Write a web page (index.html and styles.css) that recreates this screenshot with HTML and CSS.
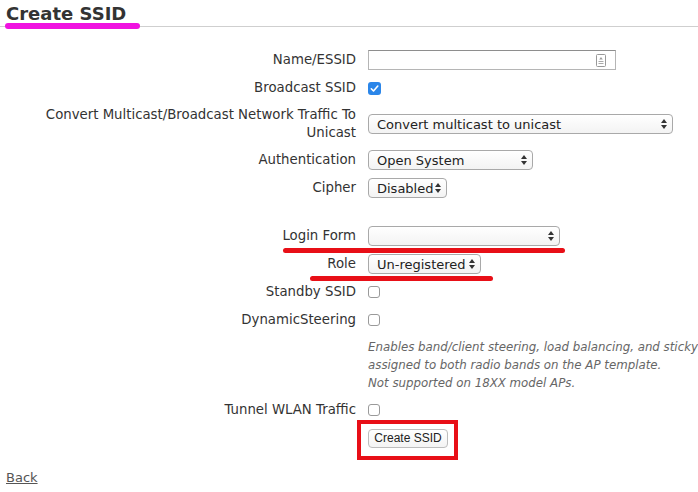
FILE: index.html
```html
<!DOCTYPE html>
<html lang="en">
<head>
    <meta charset="UTF-8">
    <title>Create SSID</title>
    <link rel="stylesheet" href="styles.css">
</head>
<body>
    <header class="page-head">
        <h1>Create SSID</h1>
        <span class="mark-magenta"></span>
    </header>

    <form class="ssid-form">
        <label class="lbl">Name/ESSID</label>
        <div class="ctl">
            <div class="text-input">
                <svg class="key-icon" width="10" height="13" viewBox="0 0 10 13">
                    <rect x="0.5" y="0.5" width="9" height="12" rx="1" fill="#fff" stroke="#999"/>
                    <path d="M5 3 L3.2 5.6 H6.8 Z" fill="#999"/>
                    <rect x="2.5" y="7" width="5" height="1" fill="#aaa"/>
                    <rect x="2.5" y="9" width="5" height="1" fill="#aaa"/>
                </svg>
            </div>
        </div>

        <label class="lbl">Broadcast SSID</label>
        <div class="ctl"><span class="check checked">
            <svg width="13" height="13" viewBox="0 0 13 13"><path d="M3.3 6.8 L5.5 9 L9.8 4" fill="none" stroke="#fff" stroke-width="1.6" stroke-linecap="round" stroke-linejoin="round"/></svg>
        </span></div>

        <label class="lbl">Convert Multicast/Broadcast Network Traffic To Unicast</label>
        <div class="ctl"><div class="select w-convert">Convert multicast to unicast<svg class="arrows" width="6" height="10" viewBox="0 0 6 10"><path d="M3 0 L6 4 H0 Z M0 6 H6 L3 10 Z" fill="#333"/></svg></div></div>

        <label class="lbl">Authentication</label>
        <div class="ctl"><div class="select w-auth">Open System<svg class="arrows" width="6" height="10" viewBox="0 0 6 10"><path d="M3 0 L6 4 H0 Z M0 6 H6 L3 10 Z" fill="#333"/></svg></div></div>

        <label class="lbl">Cipher</label>
        <div class="ctl"><div class="select w-cipher">Disabled<svg class="arrows" width="6" height="10" viewBox="0 0 6 10"><path d="M3 0 L6 4 H0 Z M0 6 H6 L3 10 Z" fill="#333"/></svg></div></div>

        <div class="spacer"></div>
        <div class="spacer"></div>

        <label class="lbl">Login Form</label>
        <div class="ctl"><div class="select w-login"><svg class="arrows" width="6" height="10" viewBox="0 0 6 10"><path d="M3 0 L6 4 H0 Z M0 6 H6 L3 10 Z" fill="#333"/></svg></div></div>

        <label class="lbl">Role</label>
        <div class="ctl"><div class="select w-role">Un-registered<svg class="arrows" width="6" height="10" viewBox="0 0 6 10"><path d="M3 0 L6 4 H0 Z M0 6 H6 L3 10 Z" fill="#333"/></svg></div></div>

        <label class="lbl">Standby SSID</label>
        <div class="ctl"><span class="check"></span></div>

        <label class="lbl">DynamicSteering</label>
        <div class="ctl"><span class="check"></span></div>

        <div></div>
        <p class="hint">Enables band/client steering, load balancing, and sticky<br>assigned to both radio bands on the AP template.<br>Not supported on 18XX model APs.</p>

        <label class="lbl">Tunnel WLAN Traffic</label>
        <div class="ctl"><span class="check"></span></div>

        <div></div>
        <div class="ctl">
            <span class="btn-wrap">
                <button type="button" class="btn">Create SSID</button>
                <span class="mark-box"></span>
            </span>
        </div>

        <span class="mark-red mark-login"></span>
        <span class="mark-red mark-role"></span>
    </form>

    <a class="back" href="#">Back</a>
</body>
</html>
```

FILE: styles.css
```css
body {
    margin: 0;
    font-family: "DejaVu Sans", Verdana, sans-serif;
    font-size: 13px;
    color: #333;
    background: #fff;
    overflow: hidden;
}

.page-head {
    position: relative;
    border-bottom: 1px solid #cfcfcf;
    padding: 3px 6px 1px;
}

.page-head h1 {
    margin: 0;
    font-size: 18px;
    line-height: 22px;
    font-weight: bold;
    color: #333;
}

.mark-magenta {
    position: absolute;
    left: 5px;
    top: 23px;
    width: 135px;
    height: 6px;
    border-radius: 3px;
    background: #f012e0;
}

.ssid-form {
    position: relative;
    display: grid;
    grid-template-columns: 350px 1fr;
    column-gap: 12px;
    row-gap: 8px;
    align-items: center;
    margin: 23px 0 0;
    padding-left: 6px;
}

.lbl {
    text-align: right;
    font-size: 13.3px;
    line-height: 18px;
    color: #333;
}

.ctl {
    display: flex;
    align-items: center;
    min-height: 20px;
}

.spacer {
    height: 12px;
}

.text-input {
    width: 248px;
    height: 20px;
    box-sizing: border-box;
    border: 1px solid #b5b5b5;
    border-top-color: #8e8e8e;
    display: flex;
    align-items: center;
    justify-content: flex-end;
    padding-right: 9px;
}

.check {
    width: 12px;
    height: 12px;
    box-sizing: border-box;
    border: 1px solid #9a9a9a;
    border-radius: 3px;
    background: #fff;
}

.check.checked {
    width: 13px;
    height: 13px;
    border: none;
    background: #2b86e9;
}

.check svg {
    display: block;
}

.select {
    height: 20px;
    box-sizing: border-box;
    border: 1px solid #a9a9a9;
    border-radius: 4px;
    background: linear-gradient(#fff, #f3f3f3);
    display: flex;
    align-items: center;
    justify-content: space-between;
    padding: 0 5px 0 8px;
    white-space: nowrap;
    color: #222;
}

.w-convert { width: 305px; }
.w-auth { width: 165px; }
.w-cipher { width: 79px; }
.w-login { width: 192px; justify-content: flex-end; }
.w-role { width: 113px; }

.hint {
    margin: 0;
    font-size: 11.8px;
    font-style: italic;
    line-height: 18px;
    color: #666;
    white-space: nowrap;
}

.btn-wrap {
    position: relative;
    display: inline-block;
}

.btn {
    display: block;
    width: 80px;
    height: 19px;
    padding: 0;
    font-family: "Liberation Sans", Arial, sans-serif;
    font-size: 12px;
    color: #222;
    background: linear-gradient(#fff, #f4f4f4);
    border: 1px solid #bdbdbd;
    border-radius: 4px;
}

.mark-box {
    position: absolute;
    left: -11px;
    top: -9px;
    right: -10px;
    bottom: -12px;
    border: 4px solid #e80f17;
}

.mark-red {
    position: absolute;
    height: 5px;
    border-radius: 3px;
    background: #e80f17;
}

.mark-login {
    left: 283px;
    top: 198px;
    width: 282px;
}

.mark-role {
    left: 310px;
    top: 226px;
    width: 183px;
}

.back {
    display: inline-block;
    margin: 21px 0 0 6px;
    line-height: 18px;
    color: #555;
}
```
